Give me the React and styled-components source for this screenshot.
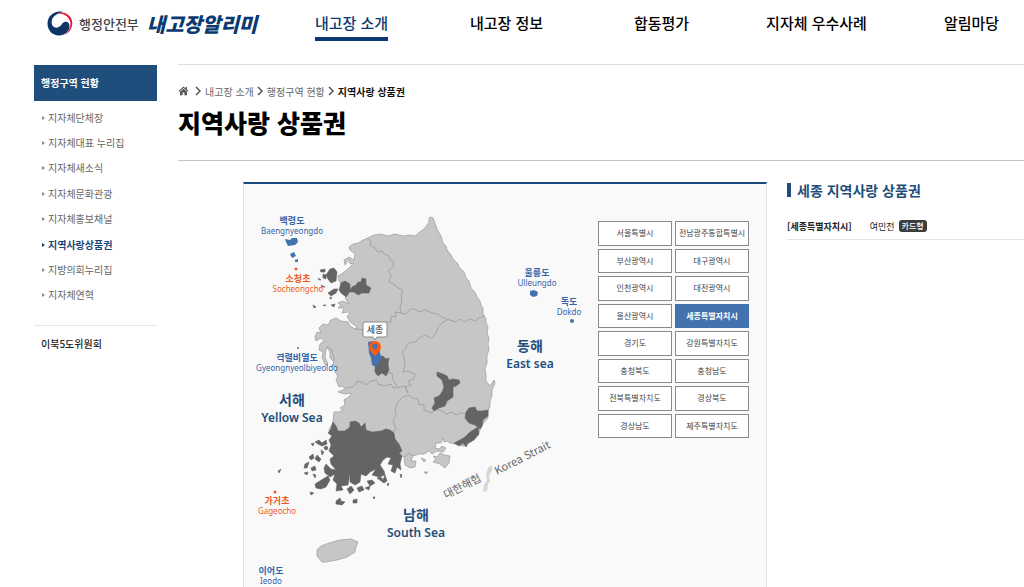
import React from "react";
import styled, { createGlobalStyle, css } from "styled-components";

const Global = createGlobalStyle`
  * { box-sizing: border-box; }
  body { margin: 0; background: #fff; }
  body, button { font-family: "Noto Sans CJK KR", "Noto Sans", sans-serif; }
  a { color: inherit; text-decoration: none; }
  ul, ol, h1, h2 { margin: 0; padding: 0; list-style: none; }
`;

const Page = styled.div`
  height: 100vh;
  overflow: hidden auto;
  scrollbar-width: none;
`;

const Header = styled.header`
  display: flex;
  align-items: flex-start;
  height: 64px;
  padding-left: 47px;
`;

const Brand = styled.div`
  display: flex;
  flex: 0 0 227px;
  align-items: center;
  height: 46px;
  white-space: nowrap;
`;

const Ministry = styled.a`
  display: flex;
  align-items: center;
  gap: 6px;
  font-size: 13px;
  font-weight: 500;
  color: #444;
`;

const SiteName = styled.a`
  margin-left: 8px;
  font-size: 20px;
  font-weight: 900;
  font-style: italic;
  color: #0b3a70;
`;

const Nav = styled.nav`
  display: flex;
  flex: 1;
  height: 41px;
`;

const NavItem = styled.div`
  display: flex;
  flex: 1 0 155px;
  justify-content: center;
`;

const NavLink = styled.a`
  padding-top: 11px;
  font-size: 15px;
  font-weight: 500;
  line-height: 24px;
  white-space: nowrap;
  color: ${(p) => (p.$active ? "#0b3a70" : "#000")};
  border-bottom: 4px solid ${(p) => (p.$active ? "#0b3a70" : "transparent")};
`;

const Body = styled.div`
  display: flex;
  align-items: flex-start;
  padding-left: 34px;
`;

const Side = styled.aside`
  flex: 0 0 123px;
  margin: 1px 21px 0 0;
`;

const SideTitle = styled.h2`
  height: 36px;
  padding-left: 7px;
  font-size: 10px;
  font-weight: 700;
  line-height: 36px;
  color: #fff;
  background: #1f4e7c;
`;

const SideList = styled.ul`
  display: grid;
  grid-auto-rows: 1fr;
  align-items: center;
  height: 203px;
  margin: 4px 0 17px;
  padding-left: 8px;
`;

const SideLink = styled.a`
  display: flex;
  align-items: center;
  gap: 3px;
  font-size: 10px;
  line-height: 16px;
  color: #666;
  &::before {
    content: "";
    border: 2px solid transparent;
    border-left: 3px solid #888;
    border-right: 0;
  }
  ${(p) =>
    p.$active &&
    css`
      font-weight: 700;
      color: #1a4675;
      &::before { border-left-color: #1a4675; }
    `}
`;

const SideExtra = styled.a`
  display: block;
  padding: 10px 7px;
  font-size: 10px;
  font-weight: 500;
  line-height: 16px;
  color: #222;
  border-top: 1px solid #e6e6e6;
`;

const Main = styled.main`
  flex: 1;
  min-width: 0;
  border-top: 1px solid #ddd;
`;

const PageHead = styled.div`
  height: 96px;
  padding-top: 18px;
  border-bottom: 1px solid #c4c4c4;
`;

const Crumbs = styled.ol`
  display: flex;
  align-items: center;
  height: 16px;
  font-size: 10px;
  color: #666;
  white-space: nowrap;
  li { display: flex; align-items: center; }
  li:first-child { margin-right: 3px; }
  svg { display: block; }
`;

const Current = styled.span`
  font-weight: 700;
  color: #111;
`;

const Title = styled.h1`
  margin-top: 5px;
  font-size: 25px;
  font-weight: 900;
  line-height: 36px;
  color: #000;
`;

const Content = styled.div`
  display: flex;
  gap: 20px;
  align-items: flex-start;
  padding: 21px 0 0 65px;
`;

const Panel = styled.section`
  display: flex;
  flex: 0 0 524px;
  align-items: flex-start;
  padding-right: 17px;
  background: #f9f9f9;
  border: 1px solid #e3e3e3;
  border-top: 2px solid #1a4a7c;
`;

const MapArt = styled.svg`
  display: block;
  flex: 0 0 340px;
  height: 440px;
  margin-right: 14px;
`;

const Regions = styled.div`
  display: grid;
  flex: 0 0 151px;
  grid-template-columns: 1fr 1fr;
  grid-auto-rows: 1fr;
  gap: 3px;
  height: 217px;
  margin-top: 37px;
`;

const RegionButton = styled.button`
  padding: 0;
  font-size: 8px;
  font-weight: ${(p) => (p.$active ? 700 : 400)};
  line-height: 14px;
  white-space: nowrap;
  color: ${(p) => (p.$active ? "#fff" : "#444")};
  background: ${(p) => (p.$active ? "#4472ae" : "#fff")};
  border: 1px solid ${(p) => (p.$active ? "#4472ae" : "#8a8a8a")};
`;

const Detail = styled.section`
  flex: 1;
  min-width: 0;
`;

const DetailTitle = styled.h2`
  display: flex;
  align-items: center;
  gap: 6px;
  height: 16px;
  font-size: 14px;
  font-weight: 700;
  line-height: 16px;
  white-space: nowrap;
  color: #1f4e7c;
  &::before {
    content: "";
    width: 4px;
    height: 14px;
    background: #1f4e7c;
  }
`;

const Voucher = styled.div`
  display: flex;
  align-items: center;
  height: 27px;
  margin-top: 15px;
  font-size: 9px;
  color: #222;
  border-bottom: 1px solid #e3e3e3;
  strong { margin-right: 18px; font-weight: 700; }
`;

const Tag = styled.span`
  margin-left: 4px;
  padding: 0 3px;
  font-size: 8px;
  font-weight: 500;
  line-height: 12px;
  color: #fff;
  background: #3c3c3c;
  border-radius: 3px;
`;

const KoLabel = styled.text`
  font-family: "Noto Sans CJK KR", sans-serif;
  font-size: ${(p) => (p.$sea ? 14 : 9)}px;
  font-weight: 700;
  text-anchor: middle;
`;

const EnLabel = styled.text`
  font-family: "Noto Sans", sans-serif;
  font-size: ${(p) => (p.$sea ? 12 : 8)}px;
  font-weight: ${(p) => (p.$sea ? 600 : 400)};
  text-anchor: middle;
`;

const StraitLabel = styled.text`
  font-family: "Noto Sans CJK KR", "Noto Sans", sans-serif;
  font-size: 11px;
  fill: #666;
`;

const CalloutLabel = styled.text`
  font-family: "Noto Sans CJK KR", sans-serif;
  font-size: 9px;
  text-anchor: middle;
  fill: #222;
`;

const NAVY = "#1f4e7c";
const BLUE = "#3565a8";
const ORANGE = "#f0591c";

const labels = [
  { ko: "백령도", en: "Baengnyeongdo", x: 292, y: 224, fill: BLUE },
  { ko: "소청초", en: "Socheongcho", x: 298, y: 282, fill: ORANGE },
  { ko: "격렬비열도", en: "Gyeongnyeolbiyeoldo", x: 297, y: 361, fill: BLUE },
  { ko: "가거초", en: "Gageocho", x: 277, y: 504, fill: ORANGE },
  { ko: "이어도", en: "Ieodo", x: 271, y: 574, fill: BLUE },
  { ko: "울릉도", en: "Ulleungdo", x: 537, y: 276, fill: BLUE },
  { ko: "독도", en: "Dokdo", x: 569, y: 305, fill: BLUE },
  { ko: "서해", en: "Yellow Sea", x: 292, y: 405, fill: NAVY, sea: true },
  { ko: "남해", en: "South Sea", x: 416, y: 520, fill: NAVY, sea: true },
  { ko: "동해", en: "East sea", x: 530, y: 351, fill: NAVY, sea: true },
];

const mainland =
  "M431 217 433 218 435 223 437 229 441 236 443 243 446 246 447 250 451 255 453 259 458 264 459 267 464 272 466 278 469 281 471 288 475 292 477 297 480 301 481 305 483 308 483 314 486 319 486 323 488 327 487 333 489 338 488 344 489 350 487 355 487 363 485 368 486 375 486 381 490 386 494 380 495 383 492 390 492 396 490 401 490 406 488 412 488 418 483 424 480 430 477 436 471 442 463 446 456 444 450 443 447 441 444 442 443 438 441 443 436 443 435 448 439 449 442 446 446 448 443 452 437 451 432 454 429 451 424 454 419 454 413 456 410 454 403 457 398 450 340 450 329 430 333 422 334 412 339 412 343 410 340 408 345 405 344 400 350 396 351 393 345 394 338 392 345 389 342 386 339 387 336 380 338 376 335 372 337 367 333 366 334 359 331 356 333 350 328 346 326 350 325 357 328 364 326 366 322 358 323 352 319 350 320 344 324 341 321 338 316 341 315 337 317 332 321 333 319 328 323 324 328 325 331 320 336 318 341 321 348 322 350 326 355 329 357 327 350 322 347 316 350 314 348 312 342 313 344 308 338 308 341 305 338 303 343 301 349 304 345 298 349 294 345 291 349 287 342 285 339 281 338 276 343 273 350 267 354 263 350 264 349 259 345 265 344 260 349 257 354 260 355 254 350 250 349 247 353 244 358 243 363 240 368 238 374 235 381 234 388 236 395 234 403 236 409 235 415 236 421 231 425 228 429 222 429 218Z";

const borders = [
  "M367 238 371 241 370 245 375 248 378 252 382 251 384 254 389 256 390 260 394 262 393 267 388 271 391 275 389 282 395 285 398 288 403 290 401 296 402 302 400 307 401 313",
  "M401 313 395 312 396 317 391 316 391 322 386 322 382 324 380 329 374 327 367 330 355 329",
  "M401 313 406 314 410 309 415 309 419 312 425 310 432 313 438 314 443 318 450 320 456 322 460 319 464 322 470 319 475 321 479 318 485 316",
  "M447 320 442 323 438 327 436 334 431 338 425 335 419 338 416 342 411 342 406 346 406 349 402 352 404 357 405 364 403 372 408 371 415 374 414 379 408 381 411 385 405 387 408 393",
  "M388 373 392 373 393 380 397 386",
  "M345 388 352 387 356 384 357 381 364 383 366 385 371 381 377 380 378 384 384 386 391 384 393 388 401 387 405 386 408 393",
  "M408 395 403 397 398 402 395 409 396 415 393 421 396 428 393 433",
  "M408 395 413 398 418 399 419 404 424 405 424 410 432 413 435 409 442 411 446 414 452 412 456 415 461 413 467 414",
];

const darkAreas = [
  "M333 422 336 426 338 431 345 431 350 427 350 422 355 421 359 423 361 427 365 423 366 430 372 432 381 431 386 429 390 430 394 433 395 439 399 444 402 451 399 453 402 456 400 464 401 470 397 467 395 473 391 471 393 465 388 464 391 458 387 457 383 460 380 465 384 471 385 475 379 477 372 475 376 469 370 472 366 476 361 474 360 482 355 485 350 482 350 473 348 485 341 486 343 490 336 491 337 484 333 480 335 474 330 477 325 473 324 468 326 464 331 469 336 470 331 464 330 459 334 456 329 451 331 445 329 440 332 436 328 433 331 429Z",
  "M323 479 328 476 330 480 326 487 321 489 316 488 315 484Z",
  "M315 442 319 440 322 443 326 440 327 444 322 446 318 444ZM311 444 314 443 313 446ZM324 447 327 446 328 449 325 450ZM309 457 313 454 314 458 311 460ZM305 464 309 462 307 468 304 468ZM311 468 315 466 316 470 312 471ZM317 455 321 459 319 462 315 459ZM321 450 324 452 322 455ZM304 473 308 472 307 475ZM313 474 316 475 315 478ZM310 492 314 493 311 495ZM278 471 281 469 279 473Z",
  "M336 501 340 498 341 501 345 502 342 505 336 504ZM353 500 357 499 357 503 353 503ZM347 489 351 486 354 490 350 494ZM357 488 362 486 364 490 359 492ZM367 481 372 480 375 483 370 486ZM377 478 381 477 383 480 385 475 387 481 384 483ZM365 488 370 486 369 490ZM387 484 389 483 388 486ZM373 497 375 497 374 499ZM400 474 402 475 401 478Z",
  "M437 372 443 374 447 376 449 380 453 379 459 380 460 383 456 386 453 387 453 397 447 401 445 406 439 408 434 411 432 408 435 403 434 398 439 396 442 392 444 387 442 380 437 376Z",
  "M466 412 469 408 475 407 477 411 482 411 488 410 488 416 483 420 482 426 480 429 475 425 469 423 465 418Z",
  "M478 427 479 434 474 440 468 443 466 447 463 443 459 446 454 443 460 440 465 437 470 432Z",
  "M380 357 383 356 386 359 389 358 388 364 389 370 386 376 382 373 378 376 375 372 375 367 378 363Z",
  "M352 287 356 285 358 282 361 282 362 278 366 279 366 285 371 288 369 293 362 293 358 295 354 292 349 292Z",
  "M341 283 345 281 350 284 350 291 346 297 341 293 339 290Z",
  "M330 269 334 268 337 272 336 281 331 283 328 279 326 275Z",
  "M320 270 325 269 325 272 321 272ZM323 274 326 275 326 279 323 278ZM328 293 334 289 338 289 336 293 331 296ZM318 278 321 280 319 280ZM321 285 325 287 322 287ZM313 305 316 307 314 308ZM331 305 335 304 334 307ZM323 305 326 305 325 306ZM330 297 332 298 330 299Z",
];

const isles =
  "M404 458 409 453 413 456 411 461 416 461 415 467 410 468 405 465ZM433 456 437 457 440 453 445 455 450 456 449 463 445 468 440 464 433 462 436 459ZM421 458 426 460 424 462ZM424 472 428 472 426 474ZM317 550 321 546 329 543 340 540 351 539 358 542 356 547 355 552 347 557 337 560 326 562 322 562 317 556ZM327 347 331 349 334 358 333 361 330 358 330 352Z";

const MapLabel = ({ ko, en, x, y, fill, sea }) => (
  <g fill={fill}>
    <KoLabel x={x} y={y} $sea={sea}>{ko}</KoLabel>
    <EnLabel x={x} y={y + (sea ? 17 : 10)} $sea={sea}>{en}</EnLabel>
  </g>
);

const KoreaMap = () => (
  <MapArt viewBox="244 184 340 440" role="img" aria-label="대한민국 지도">
    <g fill="#c6c6c6" stroke="#999" strokeWidth="0.7" strokeLinejoin="round">
      <path d={mainland} />
      <path d={isles} />
    </g>
    <g fill="none" stroke="#9b9b9b" strokeWidth="0.8" strokeLinejoin="round">
      {borders.map((d) => <path key={d} d={d} />)}
    </g>
    <g fill="#646464" stroke="#646464" strokeWidth="0.6" strokeLinejoin="round">
      {darkAreas.map((d) => <path key={d} d={d} />)}
    </g>
    <g fill="#4472ae">
      <path d="M368 342 373 341 379 344 380 353 382 359 378 363 376 367 372 365 371 358 369 353Z" />
      <path d="M285 239 290 240 292 238 297 238 298 242 295 245 288 246 286 242ZM290 254 294 252 296 256 292 258ZM295 260 298 259 298 262 295 262ZM530 291 534 290 538 292 537 296 533 297 530 295Z" />
      <circle cx="572" cy="321" r="2" />
      <circle cx="298" cy="348" r="1" />
    </g>
    <circle cx="296" cy="269" r="1.5" fill={ORANGE} />
    <circle cx="275" cy="492" r="1.5" fill={ORANGE} />
    <path d="M488 468 492 465 492 471 489 475 490 481 488 484 487 491 483 492 484 485 487 480 486 474Z" fill="#d6d6d6" />
    {labels.map((l) => <MapLabel key={l.en} {...l} />)}
    <StraitLabel transform="translate(446 499) rotate(-27)">대한해협</StraitLabel>
    <StraitLabel transform="translate(497 475) rotate(-27)">Korea Strait</StraitLabel>
    <path d="M375 356C372 353 369 350 369 347A6 6 0 0 1 381 347C381 350 378 353 375 356Z" fill="#ff5a12" />
    <circle cx="375" cy="346.500" r="2.800" fill="#4472ae" />
    <path d="M365 322H385Q387 322 387 324V335Q387 337 385 337H377L375 340 373 337H365Q363 337 363 335V324Q363 322 365 322Z" fill="#fff" stroke="#777" strokeWidth="0.8" />
    <CalloutLabel x="375" y="333">세종</CalloutLabel>
  </MapArt>
);

const Emblem = () => (
  <svg width="26" height="26" viewBox="0 0 26 26" aria-hidden="true">
    <path d="M16 2C8 0 0.500 5.500 0.500 13.500C0.500 20.500 5.500 25.500 12 25.500C18 25.500 23 21 22.500 15.500C22.300 12.500 20.500 11.300 18 11.700C15.500 12.200 15 14.500 13 16.300C10.500 18.300 7.500 18 5.800 16C3.800 13.500 4.500 8.500 7.500 6C10 3.700 12.500 3 16 2Z" fill="#0f3567" />
    <path d="M11 3.500C15 1 21 3 24 8C27 14 24.500 22 17.500 25.500C22.500 21 25 15 22.500 10C20.500 5.500 16 3.500 11 3.500Z" fill="#e3173e" />
  </svg>
);

const HomeIcon = () => (
  <svg width="11" height="10" viewBox="0 0 11 10" aria-label="홈" role="img">
    <path d="M5.500 0.500 0.500 5 1.200 5.700 5.500 2 9.800 5.700 10.500 5 9 3.600V1H7.600V2.400Z" fill="#555" />
    <path d="M5.500 2.800 2 5.800V9.200H4.600V6.600H6.400V9.200H9V5.800Z" fill="#555" />
  </svg>
);

const Chevron = () => (
  <svg width="13" height="10" viewBox="0 0 13 10" aria-hidden="true">
    <path d="M4 1 8 5 4 9" fill="none" stroke="#555" strokeWidth="1.500" />
  </svg>
);

const navItems = ["내고장 소개", "내고장 정보", "합동평가", "지자체 우수사례", "알림마당"];
const sideItems = [
  "지자체단체장", "지자체대표 누리집", "지자체새소식", "지자체문화관광",
  "지자체홍보채널", "지역사랑상품권", "지방의회누리집", "지자체연혁",
];
const regions = [
  "서울특별시", "전남광주통합특별시", "부산광역시", "대구광역시",
  "인천광역시", "대전광역시", "울산광역시", "세종특별자치시",
  "경기도", "강원특별자치도", "충청북도", "충청남도",
  "전북특별자치도", "경상북도", "경상남도", "제주특별자치도",
];

export default function App() {
  return (
    <Page lang="ko">
      <Global />
      <Header>
        <Brand>
          <Ministry href="#"><Emblem />행정안전부</Ministry>
          <SiteName href="#">내고장알리미</SiteName>
        </Brand>
        <Nav>
          {navItems.map((n, i) => (
            <NavItem key={n}><NavLink href="#" $active={i === 0}>{n}</NavLink></NavItem>
          ))}
        </Nav>
      </Header>
      <Body>
        <Side>
          <SideTitle>행정구역 현황</SideTitle>
          <SideList>
            {sideItems.map((s) => (
              <li key={s}><SideLink href="#" $active={s === "지역사랑상품권"}>{s}</SideLink></li>
            ))}
          </SideList>
          <SideExtra href="#">이북5도위원회</SideExtra>
        </Side>
        <Main>
          <PageHead>
            <Crumbs>
              <li><a href="#"><HomeIcon /></a></li>
              <li><Chevron /><a href="#">내고장 소개</a></li>
              <li><Chevron /><a href="#">행정구역 현황</a></li>
              <li><Chevron /><Current>지역사랑 상품권</Current></li>
            </Crumbs>
            <Title>지역사랑 상품권</Title>
          </PageHead>
          <Content>
            <Panel>
              <KoreaMap />
              <Regions>
                {regions.map((r) => (
                  <RegionButton key={r} type="button" $active={r === "세종특별자치시"}>{r}</RegionButton>
                ))}
              </Regions>
            </Panel>
            <Detail>
              <DetailTitle>세종 지역사랑 상품권</DetailTitle>
              <Voucher><strong>[세종특별자치시]</strong>여민전<Tag>카드형</Tag></Voucher>
            </Detail>
          </Content>
        </Main>
      </Body>
    </Page>
  );
}
